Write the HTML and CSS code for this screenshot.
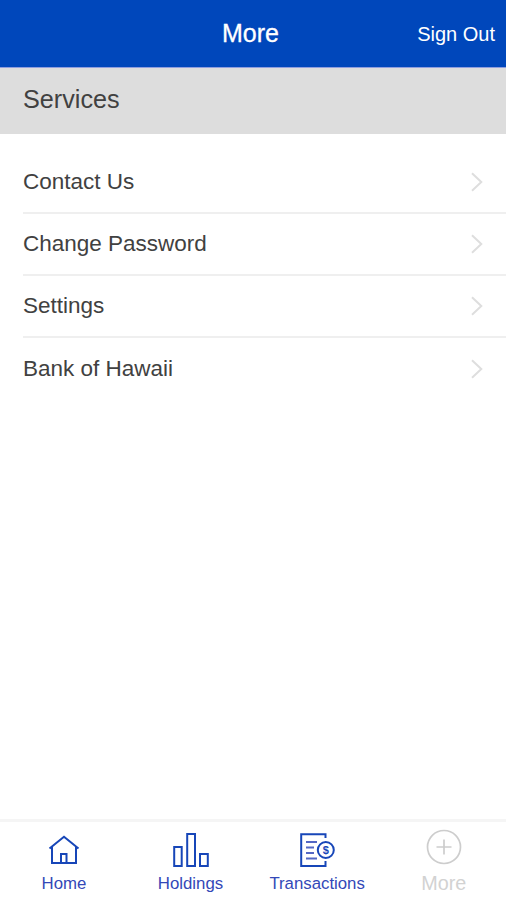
FILE: index.html
```html
<!DOCTYPE html>
<html lang="en">
<head>
    <meta charset="UTF-8">
    <meta name="viewport" content="width=device-width, initial-scale=1.0">
    <title>More</title>
    <link rel="stylesheet" href="styles.css">
</head>
<body>

<header>
    <h1>More</h1>
    <a class="sign-out">Sign Out</a>
</header>

<main>
    <h2>Services</h2>
    <ul class="menu">
        <li>
            <span>Contact Us</span>
            <svg class="chevron" width="12" height="20" viewBox="0 0 12 20"><path d="M1 1.2L10.3 10L1 18.8"/></svg>
        </li>
        <li>
            <span>Change Password</span>
            <svg class="chevron" width="12" height="20" viewBox="0 0 12 20"><path d="M1 1.2L10.3 10L1 18.8"/></svg>
        </li>
        <li>
            <span>Settings</span>
            <svg class="chevron" width="12" height="20" viewBox="0 0 12 20"><path d="M1 1.2L10.3 10L1 18.8"/></svg>
        </li>
        <li>
            <span>Bank of Hawaii</span>
            <svg class="chevron" width="12" height="20" viewBox="0 0 12 20"><path d="M1 1.2L10.3 10L1 18.8"/></svg>
        </li>
    </ul>
</main>

<nav>
    <a class="tab">
        <svg width="36" height="36" viewBox="0 0 36 36">
            <path d="M3.5 16.5L18 4.7L32.5 16.5M6 14.5V31H30V14.5M15 31V22H20.5V31"/>
        </svg>
        <span>Home</span>
    </a>
    <a class="tab">
        <svg width="36" height="36" viewBox="0 0 36 36">
            <rect x="1.2" y="15" width="7.5" height="19"/>
            <rect x="14.2" y="2" width="7.8" height="32"/>
            <rect x="27" y="22" width="7.8" height="12"/>
        </svg>
        <span>Holdings</span>
    </a>
    <a class="tab">
        <svg width="36" height="36" viewBox="0 0 36 36">
            <path d="M26.5 6V2.2H2.2V34H26.5V29"/>
            <path class="lines" d="M7 10H18M7 15.5H15M7 21H15M7 26.5H18"/>
            <circle cx="26.8" cy="18" r="8"/>
            <text x="26.8" y="22" text-anchor="middle">$</text>
        </svg>
        <span>Transactions</span>
    </a>
    <a class="tab active">
        <svg width="36" height="36" viewBox="0 0 36 36">
            <circle cx="18" cy="18" r="16.5"/>
            <path d="M18 10.5V25.5M10.5 18H25.5"/>
        </svg>
        <span>More</span>
    </a>
</nav>

</body>
</html>
```
FILE: styles.css
```css
body {
    font-family: "Liberation Sans", Arial, sans-serif;
    margin: 0;
    height: 900px;
    display: flex;
    flex-direction: column;
    overflow-x: hidden;
    background-color: #fff;
    color: #414141;
}

header {
    display: grid;
    grid-template-columns: 1fr auto 1fr;
    align-items: center;
    box-sizing: border-box;
    height: 68px;
    padding: 0 11px 0 6px;
    background-color: #0047bb;
    border-bottom: 1px solid #8f9ede;
    color: white;
}

h1 {
    grid-column: 2;
    margin: 0;
    font-size: 25px;
    font-weight: normal;
    -webkit-text-stroke: 0.3px white;
}

.sign-out {
    justify-self: end;
    font-size: 20px;
    padding-top: 1px;
}

main {
    flex: 1;
}

h2 {
    box-sizing: border-box;
    height: 66px;
    margin: 0;
    padding-left: 23px;
    background-color: #ddd;
    font-size: 25.2px;
    font-weight: normal;
    line-height: 63px;
}

.menu {
    list-style: none;
    margin: 0;
    padding: 17px 0 0 23px;
}

.menu li {
    display: flex;
    align-items: center;
    justify-content: space-between;
    box-sizing: border-box;
    height: 62px;
    padding-right: 23px;
    border-bottom: 2px solid #efefef;
    font-size: 22.5px;
}

.menu li:first-child {
    height: 63px;
}

.menu li:last-child {
    border-bottom: none;
}

svg {
    fill: none;
    stroke: #1746b8;
    stroke-width: 2;
}

.chevron {
    stroke: #dedede;
}

nav {
    display: flex;
    box-sizing: border-box;
    height: 81px;
    margin-right: -1px;
    padding-left: 0.6px;
    border-top: 3px solid #f5f5f5;
}

.tab {
    flex: 1;
    display: flex;
    flex-direction: column;
    align-items: center;
    padding-top: 10px;
    color: #3348b8;
    font-size: 16.8px;
}

.tab span {
    margin-top: 6px;
    line-height: 20px;
}

.tab .lines {
    stroke: #5367c4;
}

.tab text {
    fill: #1746b8;
    stroke: none;
    font-size: 11px;
    font-weight: bold;
}

.active {
    padding-top: 7px;
    color: #d2d2d2;
    font-size: 19.8px;
}

.active span {
    margin-top: 8px;
}

.active svg {
    stroke: #cdcdcd;
    stroke-width: 1.7;
}
```
